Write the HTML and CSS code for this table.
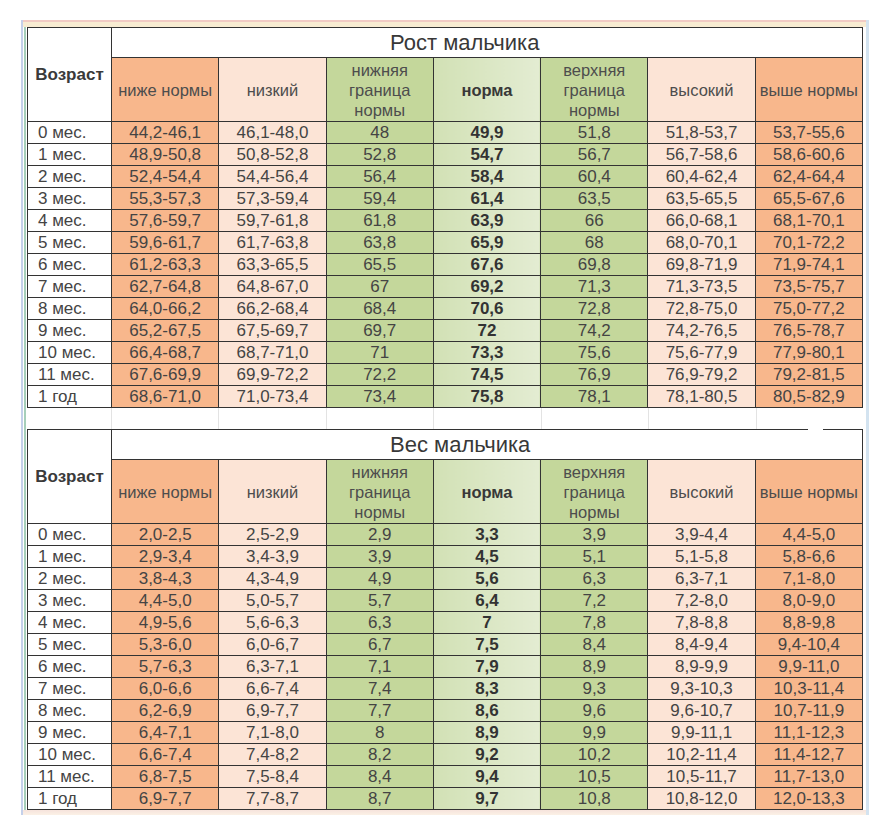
FILE: index.html
```html
<!DOCTYPE html>
<html lang="ru">
<head>
<meta charset="utf-8">
<title>Рост и вес мальчика</title>
<link rel="stylesheet" href="styles.css">
</head>
<body>
<div class="sheet">
  <div class="topbar"></div>
  <div class="frame">
    <table class="grid">
      <colgroup><col class="age-col"><col><col><col><col><col><col><col></colgroup>
      <tr class="title-row"><td class="age-head" rowspan="2">Возраст</td><td class="title" colspan="7">Рост мальчика</td></tr>
      <tr class="head-row"><td>ниже нормы</td><td>низкий</td><td>нижняя<br>граница<br>нормы</td><td class="b">норма</td><td>верхняя<br>граница<br>нормы</td><td>высокий</td><td>выше нормы</td></tr>
      <tr class="d"><td>0 мес.</td><td>44,2-46,1</td><td>46,1-48,0</td><td>48</td><td>49,9</td><td>51,8</td><td>51,8-53,7</td><td>53,7-55,6</td></tr>
      <tr class="d"><td>1 мес.</td><td>48,9-50,8</td><td>50,8-52,8</td><td>52,8</td><td>54,7</td><td>56,7</td><td>56,7-58,6</td><td>58,6-60,6</td></tr>
      <tr class="d"><td>2 мес.</td><td>52,4-54,4</td><td>54,4-56,4</td><td>56,4</td><td>58,4</td><td>60,4</td><td>60,4-62,4</td><td>62,4-64,4</td></tr>
      <tr class="d"><td>3 мес.</td><td>55,3-57,3</td><td>57,3-59,4</td><td>59,4</td><td>61,4</td><td>63,5</td><td>63,5-65,5</td><td>65,5-67,6</td></tr>
      <tr class="d"><td>4 мес.</td><td>57,6-59,7</td><td>59,7-61,8</td><td>61,8</td><td>63,9</td><td>66</td><td>66,0-68,1</td><td>68,1-70,1</td></tr>
      <tr class="d"><td>5 мес.</td><td>59,6-61,7</td><td>61,7-63,8</td><td>63,8</td><td>65,9</td><td>68</td><td>68,0-70,1</td><td>70,1-72,2</td></tr>
      <tr class="d"><td>6 мес.</td><td>61,2-63,3</td><td>63,3-65,5</td><td>65,5</td><td>67,6</td><td>69,8</td><td>69,8-71,9</td><td>71,9-74,1</td></tr>
      <tr class="d"><td>7 мес.</td><td>62,7-64,8</td><td>64,8-67,0</td><td>67</td><td>69,2</td><td>71,3</td><td>71,3-73,5</td><td>73,5-75,7</td></tr>
      <tr class="d"><td>8 мес.</td><td>64,0-66,2</td><td>66,2-68,4</td><td>68,4</td><td>70,6</td><td>72,8</td><td>72,8-75,0</td><td>75,0-77,2</td></tr>
      <tr class="d"><td>9 мес.</td><td>65,2-67,5</td><td>67,5-69,7</td><td>69,7</td><td>72</td><td>74,2</td><td>74,2-76,5</td><td>76,5-78,7</td></tr>
      <tr class="d"><td>10 мес.</td><td>66,4-68,7</td><td>68,7-71,0</td><td>71</td><td>73,3</td><td>75,6</td><td>75,6-77,9</td><td>77,9-80,1</td></tr>
      <tr class="d"><td>11 мес.</td><td>67,6-69,9</td><td>69,9-72,2</td><td>72,2</td><td>74,5</td><td>76,9</td><td>76,9-79,2</td><td>79,2-81,5</td></tr>
      <tr class="d"><td>1 год</td><td>68,6-71,0</td><td>71,0-73,4</td><td>73,4</td><td>75,8</td><td>78,1</td><td>78,1-80,5</td><td>80,5-82,9</td></tr>
    </table>
    <div class="gap"><span></span><span></span><span></span><span></span><span></span><span></span><span></span><span></span></div>
    <div class="t2">
      <span class="notch"></span>
      <table class="grid">
        <colgroup><col class="age-col"><col><col><col><col><col><col><col></colgroup>
        <tr class="title-row"><td class="age-head" rowspan="2">Возраст</td><td class="title" colspan="7">Вес мальчика</td></tr>
        <tr class="head-row"><td>ниже нормы</td><td>низкий</td><td>нижняя<br>граница<br>нормы</td><td class="b">норма</td><td>верхняя<br>граница<br>нормы</td><td>высокий</td><td>выше нормы</td></tr>
        <tr class="d"><td>0 мес.</td><td>2,0-2,5</td><td>2,5-2,9</td><td>2,9</td><td>3,3</td><td>3,9</td><td>3,9-4,4</td><td>4,4-5,0</td></tr>
        <tr class="d"><td>1 мес.</td><td>2,9-3,4</td><td>3,4-3,9</td><td>3,9</td><td>4,5</td><td>5,1</td><td>5,1-5,8</td><td>5,8-6,6</td></tr>
        <tr class="d"><td>2 мес.</td><td>3,8-4,3</td><td>4,3-4,9</td><td>4,9</td><td>5,6</td><td>6,3</td><td>6,3-7,1</td><td>7,1-8,0</td></tr>
        <tr class="d"><td>3 мес.</td><td>4,4-5,0</td><td>5,0-5,7</td><td>5,7</td><td>6,4</td><td>7,2</td><td>7,2-8,0</td><td>8,0-9,0</td></tr>
        <tr class="d"><td>4 мес.</td><td>4,9-5,6</td><td>5,6-6,3</td><td>6,3</td><td>7</td><td>7,8</td><td>7,8-8,8</td><td>8,8-9,8</td></tr>
        <tr class="d"><td>5 мес.</td><td>5,3-6,0</td><td>6,0-6,7</td><td>6,7</td><td>7,5</td><td>8,4</td><td>8,4-9,4</td><td>9,4-10,4</td></tr>
        <tr class="d"><td>6 мес.</td><td>5,7-6,3</td><td>6,3-7,1</td><td>7,1</td><td>7,9</td><td>8,9</td><td>8,9-9,9</td><td>9,9-11,0</td></tr>
        <tr class="d"><td>7 мес.</td><td>6,0-6,6</td><td>6,6-7,4</td><td>7,4</td><td>8,3</td><td>9,3</td><td>9,3-10,3</td><td>10,3-11,4</td></tr>
        <tr class="d"><td>8 мес.</td><td>6,2-6,9</td><td>6,9-7,7</td><td>7,7</td><td>8,6</td><td>9,6</td><td>9,6-10,7</td><td>10,7-11,9</td></tr>
        <tr class="d"><td>9 мес.</td><td>6,4-7,1</td><td>7,1-8,0</td><td>8</td><td>8,9</td><td>9,9</td><td>9,9-11,1</td><td>11,1-12,3</td></tr>
        <tr class="d"><td>10 мес.</td><td>6,6-7,4</td><td>7,4-8,2</td><td>8,2</td><td>9,2</td><td>10,2</td><td>10,2-11,4</td><td>11,4-12,7</td></tr>
        <tr class="d"><td>11 мес.</td><td>6,8-7,5</td><td>7,5-8,4</td><td>8,4</td><td>9,4</td><td>10,5</td><td>10,5-11,7</td><td>11,7-13,0</td></tr>
        <tr class="d"><td>1 год</td><td>6,9-7,7</td><td>7,7-8,7</td><td>8,7</td><td>9,7</td><td>10,8</td><td>10,8-12,0</td><td>12,0-13,3</td></tr>
      </table>
    </div>
  </div>
  <div class="bottombar"></div>
</div>
</body>
</html>
```

FILE: styles.css
```css
body {
  margin: 0;
  background: #ffffff;
  font-family: "Liberation Sans", Arial, sans-serif;
  color: #444444;
}

.sheet {
  margin: 20px 0 0 21px;
  width: 843px;
  border-left: 2px solid #c4d0ea;
  border-right: 3px solid #d3e3f0;
}

.topbar {
  height: 7px;
  background: linear-gradient(#f1cbc4 0 2px, #f8ecd2 2px);
}

.bottombar {
  height: 5px;
  background: linear-gradient(#f6e3dc, #fbf1e6);
}

.frame {
  display: flex;
  flex-direction: column;
  margin-left: 1px;
  border-left: 2px solid #a6cfba;
  padding: 0 3px 0 1px;
}

.grid {
  width: 836px;
  table-layout: fixed;
  border-collapse: collapse;
}

.age-col {
  width: 84px;
}

.grid td {
  border: 1px solid #333333;
  padding: 0;
  text-align: center;
  font-size: 17px;
  line-height: 20px;
  white-space: nowrap;
}

.title-row td {
  height: 29px;
}

.age-head {
  font-weight: bold;
  color: #3a3a3a;
  background: #ffffff;
}

.grid td.title {
  text-align: left;
  padding-left: 278px;
  font-size: 22px;
  color: #383838;
  background: #ffffff;
}

.head-row td {
  height: 63px;
  font-size: 16.5px;
  color: #4d4d4d;
}

.head-row td.b {
  font-weight: bold;
  color: #383838;
}

.d td {
  height: 20px;
  line-height: 20px;
  padding-top: 1px;
}

.d td:first-child {
  text-align: left;
  padding-left: 10px;
  background: #ffffff;
}

.head-row td:nth-child(1),
.head-row td:nth-child(7),
.d td:nth-child(2),
.d td:nth-child(8) {
  background: #f8b78c;
}

.head-row td:nth-child(2),
.head-row td:nth-child(6),
.d td:nth-child(3),
.d td:nth-child(7) {
  background: #fce4d6;
}

.head-row td:nth-child(3),
.head-row td:nth-child(5),
.d td:nth-child(4),
.d td:nth-child(6) {
  background: #c4d79b;
}

.head-row td:nth-child(4),
.d td:nth-child(5) {
  background: linear-gradient(90deg, #d2e1b5, #e3ecd2);
}

.d td:nth-child(5) {
  font-weight: bold;
  color: #333333;
}

.gap {
  display: grid;
  grid-template-columns: 84px repeat(7, 1fr);
  height: 21px;
  width: 836px;
}

.gap span + span {
  border-left: 1px solid #e3e3e3;
}

.t2 {
  position: relative;
}

.notch {
  position: absolute;
  left: 781px;
  top: -1px;
  width: 15px;
  height: 2px;
  background: #ffffff;
  z-index: 1;
}
```
